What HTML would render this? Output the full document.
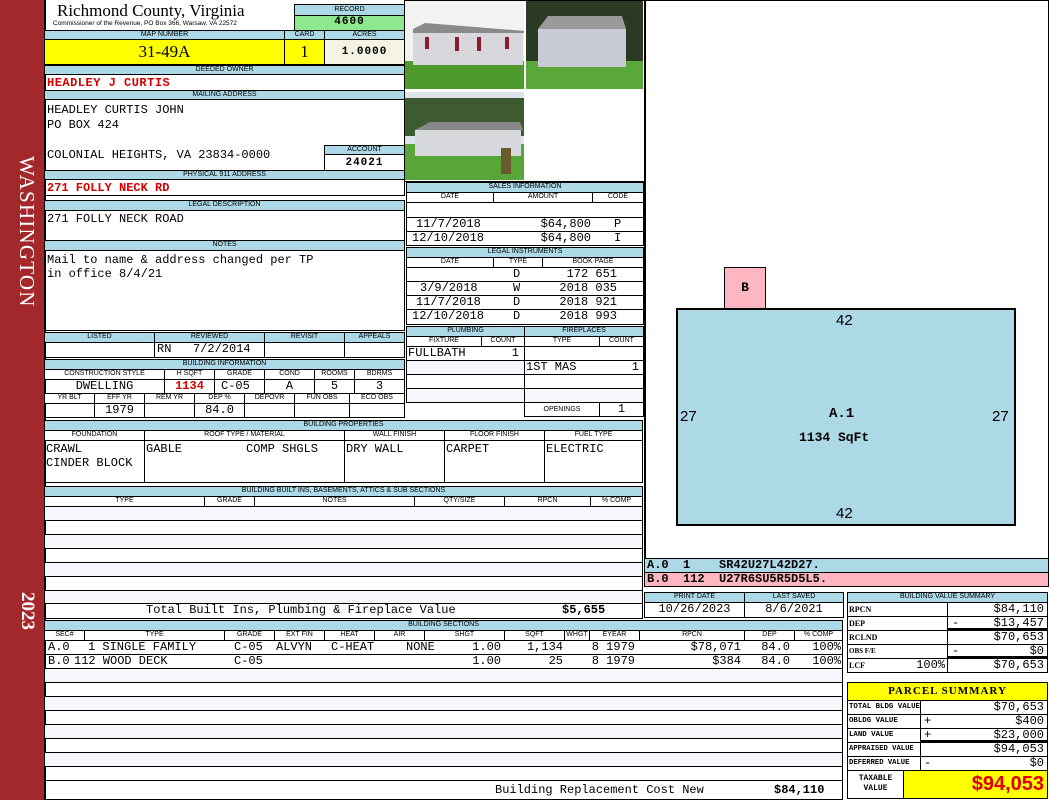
<!DOCTYPE html><html><head><meta charset="utf-8"><style>
*{margin:0;padding:0;box-sizing:border-box}
body{width:1050px;height:800px;position:relative;background:#fff;overflow:hidden;font-family:"Liberation Mono",monospace;font-size:12px;color:#000}
.a{position:absolute}
.h{position:absolute;background:#add8e6;border:1px solid #000;font:7px/8px "Liberation Sans",sans-serif;text-align:center;white-space:nowrap;overflow:hidden}
.c{position:absolute;border:1px solid #000;white-space:nowrap;overflow:hidden;line-height:13px}
.t{position:absolute;white-space:nowrap;line-height:13px}
.tr{position:absolute;white-space:nowrap;line-height:13px;text-align:right}
.r{color:#d40000;font-weight:bold}
.ctr{text-align:center}.rt{text-align:right;padding-right:3px}
.st{background:#f6f6fd}
</style></head><body>
<!-- sidebar -->
<div class="a" style="left:0;top:0;width:44px;height:800px;background:#a3282b"></div>
<div class="a" style="left:10px;top:156px;"><div style="position:absolute;left:29px;top:0;transform:rotate(90deg);transform-origin:0 0;font:21px 'Liberation Serif',serif;color:#fff;white-space:nowrap;letter-spacing:1.2px">WASHINGTON</div></div>
<div class="a" style="left:11px;top:592px;"><div style="position:absolute;left:27px;top:0;transform:rotate(90deg);transform-origin:0 0;font:bold 19px 'Liberation Serif',serif;color:#fff;white-space:nowrap">2023</div></div>
<div class="a" style="left:44px;top:0;width:2px;height:800px;background:#000"></div>

<!-- header -->
<div class="t" style="left:57px;top:2px;font:17px/18px 'Liberation Serif',serif">Richmond County, Virginia</div>
<div class="t" style="left:53px;top:20px;font:6.5px/7px 'Liberation Sans',sans-serif">Commissioner of the Revenue, PO Box 366, Warsaw, VA 22572</div>
<div class="h" style="left:294px;top:4px;width:111px;height:12px;line-height:10px">RECORD</div>
<div class="c ctr" style="left:294px;top:15px;width:111px;height:16px;background:#8ee88e;font-weight:bold;letter-spacing:1px;font-size:11px">4600</div>
<div class="h" style="left:44px;top:30px;width:241px;height:10px">MAP NUMBER</div>
<div class="h" style="left:284px;top:30px;width:41px;height:10px">CARD</div>
<div class="h" style="left:324px;top:30px;width:81px;height:10px">ACRES</div>
<div class="c ctr" style="left:44px;top:39px;width:241px;height:26px;background:#ffff00;font:17px/24px 'Liberation Serif',serif">31-49A</div>
<div class="c ctr" style="left:284px;top:39px;width:41px;height:26px;background:#ffff00;font:17px/24px 'Liberation Serif',serif">1</div>
<div class="c ctr" style="left:324px;top:39px;width:81px;height:26px;background:#f5f3e4;font-weight:bold;line-height:24px;letter-spacing:1px;font-size:11px">1.0000</div>
<div class="h" style="left:44px;top:65px;width:361px;height:10px">DEEDED OWNER</div>
<div class="c r" style="left:44px;top:74px;width:361px;height:17px;padding-left:2px;line-height:17px;letter-spacing:.5px">HEADLEY J CURTIS</div>
<div class="h" style="left:44px;top:90px;width:361px;height:10px">MAILING ADDRESS</div>
<div class="c" style="left:44px;top:99px;width:361px;height:72px;padding:3px 0 0 2px;line-height:15px">HEADLEY CURTIS JOHN<br>PO BOX 424<br><br>COLONIAL HEIGHTS, VA 23834-0000</div>
<div class="h" style="left:324px;top:145px;width:81px;height:10px">ACCOUNT</div>
<div class="c ctr" style="left:324px;top:154px;width:81px;height:17px;font-weight:bold;letter-spacing:1px;line-height:16px;font-size:11px">24021</div>
<div class="h" style="left:44px;top:170px;width:361px;height:10px">PHYSICAL 911 ADDRESS</div>
<div class="c r" style="left:44px;top:179px;width:361px;height:17px;padding-left:2px;line-height:17px">271 FOLLY NECK RD</div>
<div class="h" style="left:44px;top:200px;width:361px;height:11px">LEGAL DESCRIPTION</div>
<div class="c" style="left:44px;top:210px;width:361px;height:31px;padding:2px 0 0 2px">271 FOLLY NECK ROAD</div>
<div class="h" style="left:44px;top:240px;width:361px;height:11px">NOTES</div>
<div class="c" style="left:44px;top:250px;width:361px;height:81px;padding:2px 0 0 2px;line-height:14px">Mail to name &amp; address changed per TP<br>in office 8/4/21</div>

<!-- listed -->
<div class="h" style="left:44px;top:332px;width:111px;height:11px">LISTED</div>
<div class="h" style="left:154px;top:332px;width:111px;height:11px">REVIEWED</div>
<div class="h" style="left:264px;top:332px;width:81px;height:11px">REVISIT</div>
<div class="h" style="left:344px;top:332px;width:61px;height:11px">APPEALS</div>
<div class="c" style="left:44px;top:342px;width:111px;height:16px"></div>
<div class="c" style="left:154px;top:342px;width:111px;height:16px;padding-left:2px">RN&nbsp;&nbsp;&nbsp;7/2/2014</div>
<div class="c" style="left:264px;top:342px;width:81px;height:16px"></div>
<div class="c" style="left:344px;top:342px;width:61px;height:16px"></div>

<div class="h" style="left:44px;top:359px;width:361px;height:11px">BUILDING INFORMATION</div>
<div class="h" style="left:44px;top:369px;width:121px;height:11px;background:#fff">CONSTRUCTION STYLE</div>
<div class="h" style="left:164px;top:369px;width:51px;height:11px;background:#fff">H SQFT</div>
<div class="h" style="left:214px;top:369px;width:51px;height:11px;background:#fff">GRADE</div>
<div class="h" style="left:264px;top:369px;width:51px;height:11px;background:#fff">COND</div>
<div class="h" style="left:314px;top:369px;width:41px;height:11px;background:#fff">ROOMS</div>
<div class="h" style="left:354px;top:369px;width:51px;height:11px;background:#fff">BDRMS</div>
<div class="c ctr" style="left:44px;top:379px;width:121px;height:15px">DWELLING</div>
<div class="c ctr r" style="left:164px;top:379px;width:51px;height:15px">1134</div>
<div class="c" style="left:214px;top:379px;width:51px;height:15px;padding-left:6px">C-05</div>
<div class="c ctr" style="left:264px;top:379px;width:51px;height:15px">A</div>
<div class="c ctr" style="left:314px;top:379px;width:41px;height:15px">5</div>
<div class="c ctr" style="left:354px;top:379px;width:51px;height:15px">3</div>
<div class="h" style="left:44px;top:393px;width:51px;height:11px;background:#fff">YR BLT</div>
<div class="h" style="left:94px;top:393px;width:51px;height:11px;background:#fff">EFF YR</div>
<div class="h" style="left:144px;top:393px;width:51px;height:11px;background:#fff">REM YR</div>
<div class="h" style="left:194px;top:393px;width:51px;height:11px;background:#fff">DEP %</div>
<div class="h" style="left:244px;top:393px;width:51px;height:11px;background:#fff">DEPOVR</div>
<div class="h" style="left:294px;top:393px;width:56px;height:11px;background:#fff">FUN OBS</div>
<div class="h" style="left:349px;top:393px;width:56px;height:11px;background:#fff">ECO OBS</div>
<div class="c" style="left:44px;top:403px;width:51px;height:15px"></div>
<div class="c ctr" style="left:94px;top:403px;width:51px;height:15px">1979</div>
<div class="c" style="left:144px;top:403px;width:51px;height:15px"></div>
<div class="c ctr" style="left:194px;top:403px;width:51px;height:15px">84.0</div>
<div class="c" style="left:244px;top:403px;width:51px;height:15px"></div>
<div class="c" style="left:294px;top:403px;width:56px;height:15px"></div>
<div class="c" style="left:349px;top:403px;width:56px;height:15px"></div>

<!-- building properties -->
<div class="h" style="left:44px;top:420px;width:599px;height:11px">BUILDING PROPERTIES</div>
<div class="h" style="left:44px;top:430px;width:101px;height:11px;background:#fff">FOUNDATION</div>
<div class="h" style="left:144px;top:430px;width:201px;height:11px;background:#fff">ROOF TYPE / MATERIAL</div>
<div class="h" style="left:344px;top:430px;width:101px;height:11px;background:#fff">WALL FINISH</div>
<div class="h" style="left:444px;top:430px;width:101px;height:11px;background:#fff">FLOOR FINISH</div>
<div class="h" style="left:544px;top:430px;width:99px;height:11px;background:#fff">FUEL TYPE</div>
<div class="c" style="left:44px;top:440px;width:101px;height:43px;padding:1px 0 0 1px;line-height:14px">CRAWL<br>CINDER BLOCK</div>
<div class="c" style="left:144px;top:440px;width:201px;height:43px;padding:1px 0 0 1px;line-height:14px">GABLE<span style="position:absolute;left:101px">COMP SHGLS</span></div>
<div class="c" style="left:344px;top:440px;width:101px;height:43px;padding:1px 0 0 1px;line-height:14px">DRY WALL</div>
<div class="c" style="left:444px;top:440px;width:101px;height:43px;padding:1px 0 0 1px;line-height:14px">CARPET</div>
<div class="c" style="left:544px;top:440px;width:99px;height:43px;padding:1px 0 0 1px;line-height:14px">ELECTRIC</div>

<!-- built ins -->
<div class="h" style="left:44px;top:486px;width:599px;height:11px">BUILDING BUILT INS, BASEMENTS, ATTICS &amp; SUB SECTIONS</div>
<div class="h" style="left:44px;top:496px;width:161px;height:11px;background:#fff">TYPE</div>
<div class="h" style="left:204px;top:496px;width:51px;height:11px;background:#fff">GRADE</div>
<div class="h" style="left:254px;top:496px;width:161px;height:11px;background:#fff">NOTES</div>
<div class="h" style="left:414px;top:496px;width:91px;height:11px;background:#fff">QTY/SIZE</div>
<div class="h" style="left:504px;top:496px;width:87px;height:11px;background:#fff">RPCN</div>
<div class="h" style="left:590px;top:496px;width:53px;height:11px;background:#fff">% COMP</div>
<div class="c st" style="left:44px;top:506px;width:599px;height:15px"></div>
<div class="c" style="left:44px;top:520px;width:599px;height:15px"></div>
<div class="c st" style="left:44px;top:534px;width:599px;height:15px"></div>
<div class="c" style="left:44px;top:548px;width:599px;height:15px"></div>
<div class="c st" style="left:44px;top:562px;width:599px;height:15px"></div>
<div class="c" style="left:44px;top:576px;width:599px;height:15px"></div>
<div class="c st" style="left:44px;top:590px;width:599px;height:14px"></div>
<div class="c" style="left:44px;top:603px;width:599px;height:16px"></div>
<div class="t" style="left:146px;top:604px">Total Built Ins, Plumbing &amp; Fireplace Value</div>
<div class="t" style="left:562px;top:604px;font-weight:bold">$5,655</div>

<!-- building sections -->
<div class="h" style="left:44px;top:620px;width:799px;height:11px">BUILDING SECTIONS</div>
<div class="h" style="left:44px;top:630px;width:41px;height:11px;background:#fff">SEC#</div>
<div class="h" style="left:84px;top:630px;width:141px;height:11px;background:#fff">TYPE</div>
<div class="h" style="left:224px;top:630px;width:51px;height:11px;background:#fff">GRADE</div>
<div class="h" style="left:274px;top:630px;width:51px;height:11px;background:#fff">EXT FIN</div>
<div class="h" style="left:324px;top:630px;width:51px;height:11px;background:#fff">HEAT</div>
<div class="h" style="left:374px;top:630px;width:51px;height:11px;background:#fff">AIR</div>
<div class="h" style="left:424px;top:630px;width:81px;height:11px;background:#fff">SHGT</div>
<div class="h" style="left:504px;top:630px;width:61px;height:11px;background:#fff">SQFT</div>
<div class="h" style="left:564px;top:630px;width:26px;height:11px;background:#fff">WHGT</div>
<div class="h" style="left:589px;top:630px;width:51px;height:11px;background:#fff">EYEAR</div>
<div class="h" style="left:639px;top:630px;width:106px;height:11px;background:#fff">RPCN</div>
<div class="h" style="left:744px;top:630px;width:51px;height:11px;background:#fff">DEP</div>
<div class="h" style="left:794px;top:630px;width:49px;height:11px;background:#fff">% COMP</div>
<div class="c" style="left:44px;top:640px;width:799px;height:15px"></div>
<div class="c" style="left:44px;top:654px;width:799px;height:15px"></div>
<div class="t" style="left:48px;top:641px">A.0</div><div class="t" style="left:88px;top:641px">1 SINGLE FAMILY</div>
<div class="t" style="left:48px;top:655px">B.0</div><div class="t" style="left:74px;top:655px">112 WOOD DECK</div>
<div class="t" style="left:234px;top:641px">C-05</div><div class="t" style="left:276px;top:641px">ALVYN</div><div class="t" style="left:331px;top:641px">C-HEAT</div>
<div class="t" style="left:234px;top:655px">C-05</div>
<div class="t" style="left:406px;top:641px">NONE</div>
<div class="tr" style="right:549px;top:641px">1.00</div><div class="tr" style="right:549px;top:655px">1.00</div>
<div class="tr" style="right:487px;top:641px">1,134</div><div class="tr" style="right:487px;top:655px">25</div>
<div class="tr" style="right:415px;top:641px">8 1979</div><div class="tr" style="right:415px;top:655px">8 1979</div>
<div class="tr" style="right:309px;top:641px">$78,071</div><div class="tr" style="right:309px;top:655px">$384</div>
<div class="tr" style="right:260px;top:641px">84.0</div><div class="tr" style="right:260px;top:655px">84.0</div>
<div class="tr" style="right:209px;top:641px">100%</div><div class="tr" style="right:209px;top:655px">100%</div>
<div class="c st" style="left:44px;top:668px;width:799px;height:15px"></div>
<div class="c" style="left:44px;top:682px;width:799px;height:15px"></div>
<div class="c st" style="left:44px;top:696px;width:799px;height:15px"></div>
<div class="c" style="left:44px;top:710px;width:799px;height:15px"></div>
<div class="c st" style="left:44px;top:724px;width:799px;height:15px"></div>
<div class="c" style="left:44px;top:738px;width:799px;height:15px"></div>
<div class="c st" style="left:44px;top:752px;width:799px;height:15px"></div>
<div class="c" style="left:44px;top:766px;width:799px;height:15px"></div>
<div class="c" style="left:44px;top:780px;width:799px;height:20px"></div>
<div class="t" style="left:495px;top:784px">Building Replacement Cost New</div>
<div class="t" style="left:774px;top:784px;font-weight:bold">$84,110</div>

<!-- photos -->
<div class="a" style="left:404px;top:0;width:241px;height:182px;border:1px solid #000"></div>
<svg class="a" style="left:405px;top:1px" width="119" height="88"><rect width="119" height="88" fill="#f2f2f2"/><rect y="60" width="119" height="28" fill="#4f9a2e"/><polygon points="8,28 20,22 120,30 116,35 8,34" fill="#8a8a8a"/><rect x="8" y="32" width="110" height="32" fill="#d8d8dc"/><rect x="50" y="36" width="4" height="14" fill="#8c1a2a"/><rect x="72" y="36" width="4" height="14" fill="#8c1a2a"/><rect x="20" y="36" width="4" height="12" fill="#8c1a2a"/><rect x="100" y="36" width="4" height="12" fill="#8c1a2a"/></svg>
<svg class="a" style="left:526px;top:1px" width="117" height="88"><rect width="117" height="88" fill="#2b3a25"/><rect y="60" width="117" height="28" fill="#5aa83a"/><polygon points="12,28 22,15 96,15 100,28" fill="#9a9a9a"/><rect x="12" y="28" width="88" height="38" fill="#c8ccd2"/></svg>
<svg class="a" style="left:405px;top:92px" width="119" height="88"><rect width="119" height="88" fill="#dfe4e8"/><rect y="6" width="119" height="38" fill="#3e5a30"/><rect y="52" width="119" height="36" fill="#58a63a"/><polygon points="10,38 25,30 115,30 118,38" fill="#888"/><rect x="10" y="38" width="106" height="26" fill="#d6d8dc"/><rect x="96" y="56" width="10" height="26" fill="#6a5a30"/></svg>

<!-- sales -->
<div class="h" style="left:406px;top:182px;width:238px;height:11px">SALES INFORMATION</div>
<div class="h" style="left:406px;top:192px;width:88px;height:11px;background:#fff">DATE</div>
<div class="h" style="left:493px;top:192px;width:100px;height:11px;background:#fff">AMOUNT</div>
<div class="h" style="left:592px;top:192px;width:52px;height:11px;background:#fff">CODE</div>
<div class="c" style="left:406px;top:202px;width:238px;height:16px"></div>
<div class="c" style="left:406px;top:217px;width:238px;height:15px"></div>
<div class="c" style="left:406px;top:231px;width:238px;height:15px"></div>
<div class="t" style="left:416px;top:218px">11/7/2018</div><div class="tr" style="right:459px;top:218px">$64,800</div><div class="t" style="left:614px;top:218px">P</div>
<div class="t" style="left:412px;top:232px">12/10/2018</div><div class="tr" style="right:459px;top:232px">$64,800</div><div class="t" style="left:614px;top:232px">I</div>
<div class="h" style="left:406px;top:247px;width:238px;height:11px">LEGAL INSTRUMENTS</div>
<div class="h" style="left:406px;top:257px;width:88px;height:11px;background:#fff">DATE</div>
<div class="h" style="left:493px;top:257px;width:50px;height:11px;background:#fff">TYPE</div>
<div class="h" style="left:542px;top:257px;width:102px;height:11px;background:#fff">BOOK PAGE</div>
<div class="c" style="left:406px;top:267px;width:238px;height:15px"></div>
<div class="c" style="left:406px;top:281px;width:238px;height:15px"></div>
<div class="c" style="left:406px;top:295px;width:238px;height:15px"></div>
<div class="c" style="left:406px;top:309px;width:238px;height:16px"></div>
<div class="t" style="left:513px;top:268px">D</div><div class="tr" style="right:433px;top:268px">172 651</div>
<div class="t" style="left:420px;top:282px">3/9/2018</div><div class="t" style="left:513px;top:282px">W</div><div class="tr" style="right:433px;top:282px">2018 035</div>
<div class="t" style="left:416px;top:296px">11/7/2018</div><div class="t" style="left:513px;top:296px">D</div><div class="tr" style="right:433px;top:296px">2018 921</div>
<div class="t" style="left:412px;top:310px">12/10/2018</div><div class="t" style="left:513px;top:310px">D</div><div class="tr" style="right:433px;top:310px">2018 993</div>

<!-- plumbing -->
<div class="h" style="left:406px;top:326px;width:119px;height:11px">PLUMBING</div>
<div class="h" style="left:524px;top:326px;width:120px;height:11px">FIREPLACES</div>
<div class="h" style="left:406px;top:336px;width:76px;height:11px;background:#fff">FIXTURE</div>
<div class="h" style="left:481px;top:336px;width:44px;height:11px;background:#fff">COUNT</div>
<div class="h" style="left:524px;top:336px;width:76px;height:11px;background:#fff">TYPE</div>
<div class="h" style="left:599px;top:336px;width:45px;height:11px;background:#fff">COUNT</div>
<div class="c" style="left:406px;top:346px;width:119px;height:15px;padding-left:1px">FULLBATH<span style="position:absolute;right:5px">1</span></div>
<div class="c st" style="left:406px;top:360px;width:119px;height:15px"></div>
<div class="c" style="left:406px;top:374px;width:119px;height:15px"></div>
<div class="c st" style="left:406px;top:388px;width:119px;height:15px"></div>
<div class="c" style="left:524px;top:346px;width:120px;height:15px"></div>
<div class="c" style="left:524px;top:360px;width:120px;height:15px;padding-left:1px">1ST MAS<span style="position:absolute;right:4px">1</span></div>
<div class="c" style="left:524px;top:374px;width:120px;height:15px"></div>
<div class="c st" style="left:524px;top:388px;width:120px;height:15px"></div>
<div class="c" style="left:524px;top:402px;width:76px;height:15px;font:7px/13px 'Liberation Sans',sans-serif;text-align:center">OPENINGS</div>
<div class="c ctr" style="left:599px;top:402px;width:45px;height:15px">1</div>

<!-- sketch -->
<div class="a" style="left:644px;top:0;width:405px;height:559px;border:1px solid #000;border-left:2px solid #000"></div>
<div class="a" style="left:724px;top:267px;width:42px;height:42px;background:#ffb6c1;border:1px solid #000;font-weight:bold;text-align:center;line-height:40px;font-size:13px">B</div>
<div class="a" style="left:676px;top:308px;width:340px;height:218px;background:#add8e6;border:2px solid #000"></div>
<div class="t" style="left:836px;top:312px;font:15px 'Liberation Sans',sans-serif">42</div>
<div class="t" style="left:836px;top:505px;font:15px 'Liberation Sans',sans-serif">42</div>
<div class="t" style="left:680px;top:408px;font:15px 'Liberation Sans',sans-serif">27</div>
<div class="t" style="left:992px;top:408px;font:15px 'Liberation Sans',sans-serif">27</div>
<div class="t" style="left:829px;top:408px;font-weight:bold;font-size:14px">A.1</div>
<div class="t" style="left:799px;top:431px;font-weight:bold;font-size:13px">1134 SqFt</div>
<div class="c" style="left:644px;top:558px;width:405px;height:15px;background:#add8e6;font-weight:bold;padding-left:2px">A.0&nbsp;&nbsp;1&nbsp;&nbsp;&nbsp;&nbsp;SR42U27L42D27.</div>
<div class="c" style="left:644px;top:572px;width:405px;height:15px;background:#ffb6c1;font-weight:bold;padding-left:2px">B.0&nbsp;&nbsp;112&nbsp;&nbsp;U27R6SU5R5D5L5.</div>

<!-- print date -->
<div class="h" style="left:644px;top:592px;width:101px;height:11px">PRINT DATE</div>
<div class="h" style="left:744px;top:592px;width:100px;height:11px">LAST SAVED</div>
<div class="c ctr" style="left:644px;top:602px;width:101px;height:16px;font-size:12px">10/26/2023</div>
<div class="c ctr" style="left:744px;top:602px;width:100px;height:16px;font-size:12px">8/6/2021</div>

<!-- value summary -->
<div class="h" style="left:847px;top:592px;width:201px;height:11px">BUILDING VALUE SUMMARY</div>
<div class="c" style="left:847px;top:602px;width:101px;height:15px;font:bold 8px/13px 'Liberation Serif',serif;padding-left:1px">RPCN</div>
<div class="c rt" style="left:947px;top:602px;width:101px;height:15px;font-size:12px">$84,110</div>
<div class="c" style="left:847px;top:616px;width:101px;height:15px;font:bold 8px/13px 'Liberation Serif',serif;padding-left:1px">DEP</div>
<div class="c rt" style="left:947px;top:616px;width:101px;height:15px;font-size:12px;border-bottom:3px solid #000"><span style="float:left;padding-left:4px">-</span>$13,457</div>
<div class="c" style="left:847px;top:630px;width:101px;height:15px;font:bold 8px/13px 'Liberation Serif',serif;padding-left:1px">RCLND</div>
<div class="c rt" style="left:947px;top:630px;width:101px;height:15px;font-size:12px">$70,653</div>
<div class="c" style="left:847px;top:644px;width:101px;height:15px;font:bold 7px/13px 'Liberation Serif',serif;padding-left:1px">OBS F/E</div>
<div class="c rt" style="left:947px;top:644px;width:101px;height:15px;font-size:12px;border-bottom:3px solid #000"><span style="float:left;padding-left:4px">-</span>$0</div>
<div class="c" style="left:847px;top:658px;width:101px;height:15px;font:bold 8px/13px 'Liberation Serif',serif;padding-left:1px">LCF<span style="float:right;font:12px/13px 'Liberation Mono';padding-right:2px">100%</span></div>
<div class="c rt" style="left:947px;top:658px;width:101px;height:15px;font-size:12px">$70,653</div>

<!-- parcel summary -->
<div class="c ctr" style="left:847px;top:682px;width:201px;height:19px;background:#ffff00;font:bold 11px/17px 'Liberation Serif',serif;letter-spacing:1px">PARCEL SUMMARY</div>
<div class="c" style="left:847px;top:700px;width:74px;height:15px;font:bold 7.4px/13px 'Liberation Mono';padding-left:1px">TOTAL BLDG VALUE</div>
<div class="c rt" style="left:920px;top:700px;width:128px;height:15px;font-size:12px">$70,653</div>
<div class="c" style="left:847px;top:714px;width:74px;height:15px;font:bold 7.4px/13px 'Liberation Mono';padding-left:1px">OBLDG VALUE</div>
<div class="c rt" style="left:920px;top:714px;width:128px;height:15px;font-size:12px"><span style="float:left;padding-left:3px">+</span>$400</div>
<div class="c" style="left:847px;top:728px;width:74px;height:15px;font:bold 7.4px/13px 'Liberation Mono';padding-left:1px">LAND VALUE</div>
<div class="c rt" style="left:920px;top:728px;width:128px;height:15px;font-size:12px;border-bottom:3px solid #000"><span style="float:left;padding-left:3px">+</span>$23,000</div>
<div class="c" style="left:847px;top:742px;width:74px;height:15px;font:bold 7.2px/13px 'Liberation Mono';padding-left:1px">APPRAISED VALUE</div>
<div class="c rt" style="left:920px;top:742px;width:128px;height:15px;font-size:12px">$94,053</div>
<div class="c" style="left:847px;top:756px;width:74px;height:15px;font:bold 7.2px/13px 'Liberation Mono';padding-left:1px">DEFERRED VALUE</div>
<div class="c rt" style="left:920px;top:756px;width:128px;height:15px;font-size:12px"><span style="float:left;padding-left:3px">-</span>$0</div>
<div class="c ctr" style="left:847px;top:770px;width:57px;height:29px;font:bold 8px/10px 'Liberation Mono';padding-top:3px">TAXABLE<br>VALUE</div>
<div class="c rt" style="left:903px;top:770px;width:145px;height:29px;background:#ffff00;color:#e00000;font:bold 20px/27px 'Liberation Sans',sans-serif">$94,053</div>
</body></html>
